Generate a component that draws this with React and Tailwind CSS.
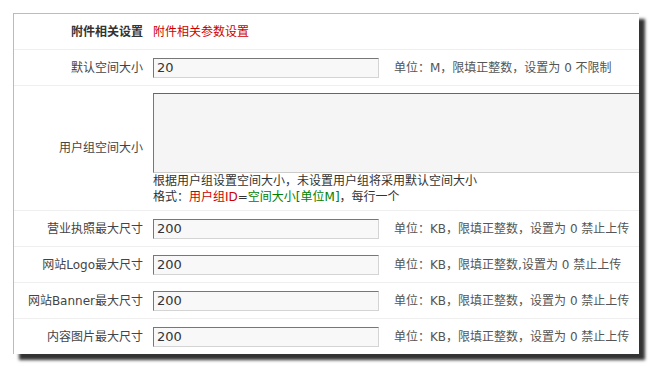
import React from 'react';

const font = 'font-["Tahoma","DejaVu_Sans","Noto_Sans_CJK_SC",sans-serif]';

const Row = ({ label, children, bold }) => (
  <div className="flex items-center border-b border-[#efefef] min-h-[36px]">
    <div className={`w-[129px] shrink-0 text-right ${bold ? 'font-bold text-[#333]' : 'text-[#444]'}`}>{label}</div>
    <div className="flex-1 pl-[10px] flex items-center">{children}</div>
  </div>
);

const Input = ({ value }) => (
  <input
    readOnly
    value={value}
    className="w-[226px] h-[20px] px-[3px] bg-[#f8f8f8] border border-t-[#777] border-l-[#777] border-r-[#d4d4d4] border-b-[#d4d4d4] text-[13px] text-[#333] font-['DejaVu_Sans',sans-serif] outline-none"
  />
);

const Help = ({ children }) => (
  <span className="ml-[15px] text-[#555] whitespace-nowrap">{children}</span>
);

const sizeRows = [
  { label: '营业执照最大尺寸', help: '单位：KB，限填正整数，设置为 0 禁止上传' },
  { label: '网站Logo最大尺寸', help: '单位：KB，限填正整数,设置为 0 禁止上传' },
  { label: '网站Banner最大尺寸', help: '单位：KB，限填正整数，设置为 0 禁止上传' },
  { label: '内容图片最大尺寸', help: '单位：KB，限填正整数，设置为 0 禁止上传' },
];

export default function App() {
  return (
    <div className={`w-[653px] h-[368px] bg-white pt-[13px] pl-[13px] text-[12px] leading-[16px] ${font}`}>
      <div className="w-[626px] h-[341px] bg-white border-l border-t border-[#bbb] overflow-hidden shadow-[6px_6px_3px_rgba(0,0,0,0.8)]">
        <Row label="附件相关设置" bold>
          <span className="text-[#cc0000]">附件相关参数设置</span>
        </Row>
        <Row label="默认空间大小">
          <Input value="20" />
          <Help>单位：M，限填正整数，设置为 0 不限制</Help>
        </Row>
        <div className="flex items-center border-b border-[#efefef] h-[125px]">
          <div className="w-[129px] shrink-0 text-right text-[#444]">用户组空间大小</div>
          <div className="flex-1 pl-[10px] pt-[7px] self-start">
            <textarea
              readOnly
              className="block w-[500px] h-[80px] bg-[#f5f5f5] border border-t-[#666] border-l-[#777] border-b-[#ccc] border-r-[#ccc] resize-none outline-none"
            />
            <div className="text-[#333]">根据用户组设置空间大小，未设置用户组将采用默认空间大小</div>
            <div className="text-[#333]">
              格式：<span className="text-[#cc0000]">用户组ID</span>=<span className="text-[#008000]">空间大小[单位M]</span>，每行一个
            </div>
          </div>
        </div>
        {sizeRows.map((r) => (
          <Row key={r.label} label={r.label}>
            <Input value="200" />
            <Help>{r.help}</Help>
          </Row>
        ))}
      </div>
    </div>
  );
}
